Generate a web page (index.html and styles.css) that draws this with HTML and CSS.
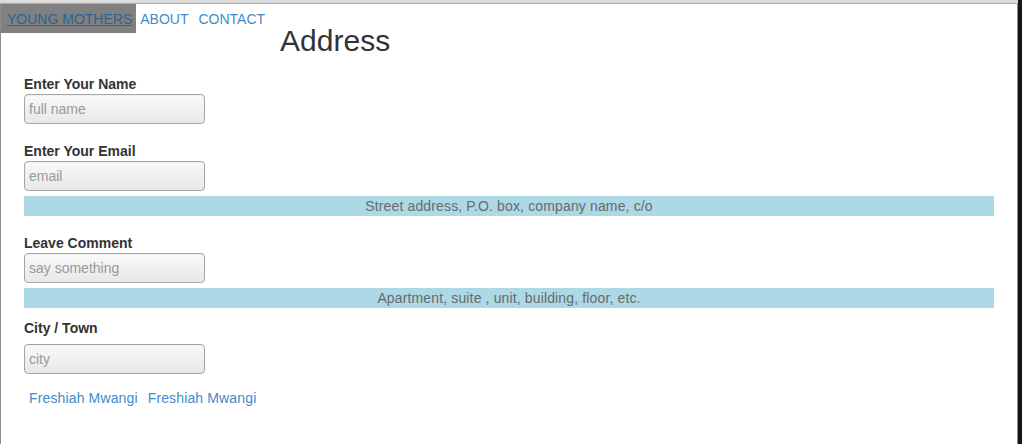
FILE: index.html
```html
<!DOCTYPE html>
<html lang="en">
<head>
<meta charset="utf-8">
<title>Address</title>
<link rel="stylesheet" href="styles.css">
</head>
<body>
<div class="window">
  <div class="topbar"></div>
  <div class="header">
    <ul class="nav">
      <li><a class="nav-link nav-active" href="#">YOUNG MOTHERS</a></li>
      <li><a class="nav-link nav-about" href="#">ABOUT</a></li>
      <li><a class="nav-link" href="#">CONTACT</a></li>
    </ul>
    <h2 class="title">Address</h2>
  </div>
  <form class="form">
    <div class="field field-first">
      <label class="label">Enter Your Name</label>
      <input class="input" type="text" placeholder="full name">
    </div>
    <div class="field">
      <label class="label">Enter Your Email</label>
      <input class="input" type="text" placeholder="email">
    </div>
    <div class="bar">Street address, P.O. box, company name, c/o</div>
    <div class="field">
      <label class="label">Leave Comment</label>
      <input class="input" type="text" placeholder="say something">
    </div>
    <div class="bar">Apartment, suite , unit, building, floor, etc.</div>
    <div class="field field-city">
      <label class="label">City / Town</label>
      <input class="input input-spaced" type="text" placeholder="city">
    </div>
    <div class="links">
      <a class="link" href="#">Freshiah Mwangi</a>
      <a class="link" href="#">Freshiah Mwangi</a>
    </div>
  </form>
</div>
</body>
</html>
```

FILE: styles.css
```css
* {
  box-sizing: border-box;
}

html, body {
  margin: 0;
  padding: 0;
}

body {
  background: #161616;
  font-family: "Liberation Sans", Arial, sans-serif;
  font-size: 14px;
  line-height: 20px;
  color: #333;
}

.window {
  width: 1018px;
  height: 444px;
  background: #fff;
  border-left: 1px solid #8c8c8c;
  border-right: 1px solid #8c8c8c;
}

.topbar {
  height: 4px;
  margin-left: -1px;
  margin-right: -1px;
  background: #dcdcdc;
  border-bottom: 1px solid #a8a8a8;
}

.header {
  display: flex;
  align-items: flex-start;
}

.nav {
  display: flex;
  list-style: none;
  margin: 0;
  padding: 0;
}

.nav-link {
  display: block;
  padding: 5px 5px 4px 5px;
  line-height: 20px;
  color: #428bca;
  text-decoration: none;
}

.nav-active {
  padding-left: 6px;
  padding-right: 4px;
  background: #808080;
  color: #2a6496;
  text-decoration: underline;
}

.nav-about {
  padding-left: 4px;
}

.title {
  margin: 20px 0 10px 10px;
  font-size: 30px;
  line-height: 33px;
  font-weight: normal;
  color: #333;
}

.form {
  padding: 0 23px;
}

.field {
  margin-top: 17px;
}

.field-first {
  margin-top: 7px;
}

.field-city {
  margin-top: 10px;
}

.label {
  display: block;
  font-weight: bold;
  line-height: 20px;
}

.input {
  display: block;
  width: 181px;
  height: 30px;
  padding: 0 4px;
  border: 1px solid #a6a6a6;
  border-radius: 4px;
  background: linear-gradient(#f9f9f9, #e8e8e8);
  font-family: "Liberation Sans", Arial, sans-serif;
  font-size: 14px;
  color: #333;
  box-shadow: inset 0 1px 1px rgba(0, 0, 0, 0.04);
}

.input::placeholder {
  color: #999;
}

.input-spaced {
  margin-top: 6px;
}

.bar {
  margin-top: 5px;
  height: 20px;
  line-height: 20px;
  text-align: center;
  letter-spacing: 0.14px;
  background: #add8e6;
  color: #6a6a6a;
}

.links {
  display: flex;
  gap: 10px;
  margin-top: 14px;
  padding-left: 5px;
}

.link {
  letter-spacing: 0.14px;
  color: #428bca;
  text-decoration: none;
}
```
